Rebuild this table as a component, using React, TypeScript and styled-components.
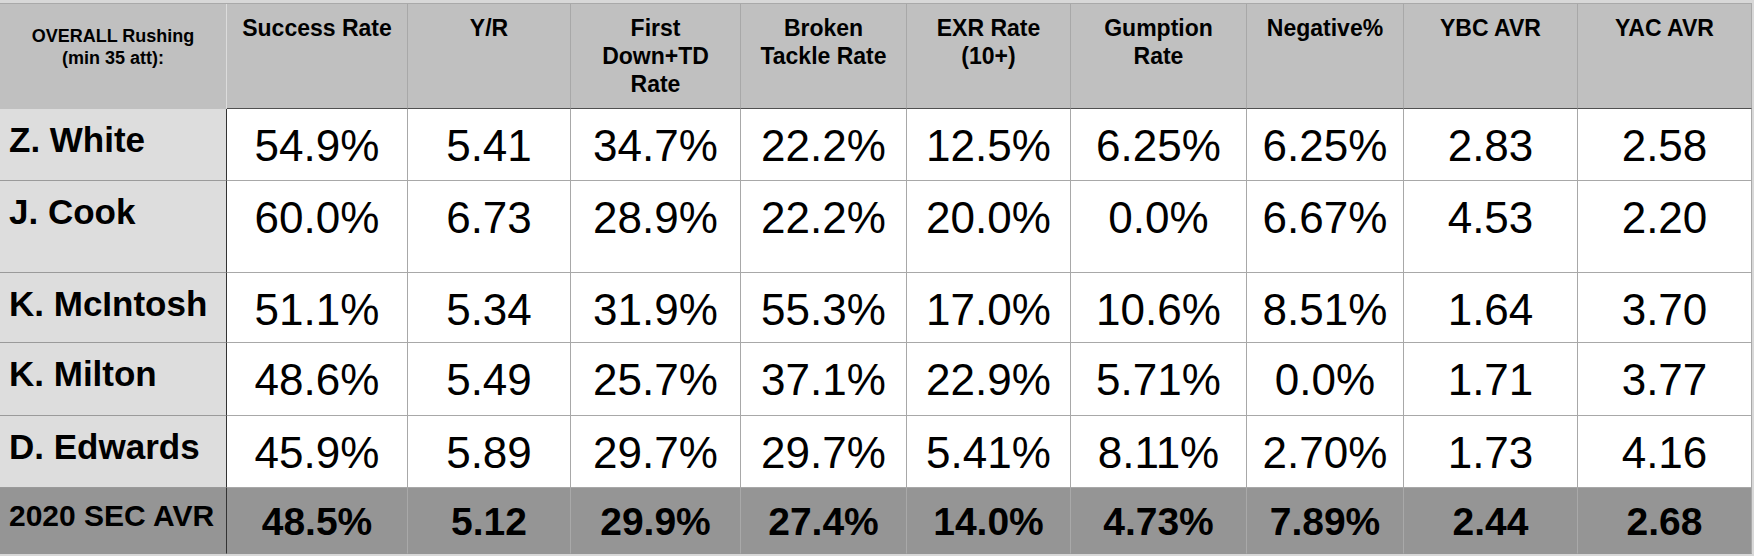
import React from "react";
import { styled, createGlobalStyle } from "styled-components";

const GlobalStyle = createGlobalStyle`
    html, body {
        margin: 0;
        padding: 0;
        background: #d8d8d8;
    }
    body {
        font-family: "Liberation Sans", Arial, Helvetica, sans-serif;
        color: #000;
    }
`;

// column widths measured from the sheet, they add up to 1752
const COLUMNS = "227px 181px 163px 170px 166px 164px 176px 157px 174px 174px";

const Sheet = styled.div`
    width: 1752px;
    margin-top: 3px;
    border-top: 1px solid #a9a9a9;
    display: flex;
    flex-direction: column;
`;

const Row = styled.div<{ $height: number }>`
    display: grid;
    grid-template-columns: ${COLUMNS};
    height: ${(p) => p.$height}px;
`;

const Cell = styled.div`
    box-sizing: border-box;
    border-right: 1px solid #a8a8a8;
    border-bottom: 1px solid #a8a8a8;
    overflow: hidden;
    white-space: nowrap;
`;

const Corner = styled(Cell)`
    background: #c0c0c0;
    border-right-color: #dcdcdc;
    border-bottom-color: #c0c0c0;
    padding-top: 22px;
    text-align: center;
    font-size: 18px;
    font-weight: 700;
    line-height: 21.6px;
`;

const HeadCell = styled(Cell)`
    background: #c0c0c0;
    border-bottom-color: #505050;
    padding-top: 10px;
    text-align: center;
    font-size: 23px;
    font-weight: 700;
    line-height: 28px;
`;

const NameCell = styled(Cell)`
    background: #dddddd;
    border-right-color: #333;
    border-bottom-color: #9a9a9a;
    padding: 10px 0 0 9px;
    font-size: 35px;
    font-weight: 700;
    line-height: 42px;
`;

const ValueCell = styled(Cell)`
    background: #fff;
    padding-top: 12px;
    text-align: center;
    font-size: 44px;
    line-height: 50px;
`;

const TotalLabel = styled(Cell)`
    background: #959595;
    border-right-color: #333;
    border-bottom-color: #959595;
    padding: 10px 0 0 9px;
    font-size: 30px;
    font-weight: 700;
    line-height: 36px;
`;

const TotalCell = styled(Cell)`
    background: #959595;
    border-right-color: #a9a9a9;
    border-bottom-color: #959595;
    padding-top: 12px;
    text-align: center;
    font-size: 39px;
    font-weight: 700;
    line-height: 44px;
`;

const headers: string[][] = [
    ["Success Rate"],
    ["Y/R"],
    ["First", "Down+TD", "Rate"],
    ["Broken", "Tackle Rate"],
    ["EXR Rate", "(10+)"],
    ["Gumption", "Rate"],
    ["Negative%"],
    ["YBC AVR"],
    ["YAC AVR"],
];

type Player = { name: string; height: number; values: string[] };

const players: Player[] = [
    { name: "Z. White", height: 72, values: ["54.9%", "5.41", "34.7%", "22.2%", "12.5%", "6.25%", "6.25%", "2.83", "2.58"] },
    { name: "J. Cook", height: 92, values: ["60.0%", "6.73", "28.9%", "22.2%", "20.0%", "0.0%", "6.67%", "4.53", "2.20"] },
    { name: "K. McIntosh", height: 70, values: ["51.1%", "5.34", "31.9%", "55.3%", "17.0%", "10.6%", "8.51%", "1.64", "3.70"] },
    { name: "K. Milton", height: 73, values: ["48.6%", "5.49", "25.7%", "37.1%", "22.9%", "5.71%", "0.0%", "1.71", "3.77"] },
    { name: "D. Edwards", height: 72, values: ["45.9%", "5.89", "29.7%", "29.7%", "5.41%", "8.11%", "2.70%", "1.73", "4.16"] },
];

const secAverage = ["48.5%", "5.12", "29.9%", "27.4%", "14.0%", "4.73%", "7.89%", "2.44", "2.68"];

const Lines: React.FC<{ lines: string[] }> = ({ lines }) => (
    <>
        {lines.map((line, i) => (
            <React.Fragment key={i}>
                {i > 0 && <br />}
                {line}
            </React.Fragment>
        ))}
    </>
);

const App: React.FC = () => {
    return (
        <>
            <GlobalStyle />
            <Sheet>
                <Row $height={105}>
                    <Corner>
                        <Lines lines={["OVERALL Rushing", "(min 35 att):"]} />
                    </Corner>
                    {headers.map((h, i) => (
                        <HeadCell key={i}>
                            <Lines lines={h} />
                        </HeadCell>
                    ))}
                </Row>
                {players.map((p) => (
                    <Row key={p.name} $height={p.height}>
                        <NameCell>{p.name}</NameCell>
                        {p.values.map((v, i) => (
                            <ValueCell key={i}>{v}</ValueCell>
                        ))}
                    </Row>
                ))}
                <Row $height={66}>
                    <TotalLabel>2020 SEC AVR</TotalLabel>
                    {secAverage.map((v, i) => (
                        <TotalCell key={i}>{v}</TotalCell>
                    ))}
                </Row>
            </Sheet>
        </>
    );
};

export default App;
